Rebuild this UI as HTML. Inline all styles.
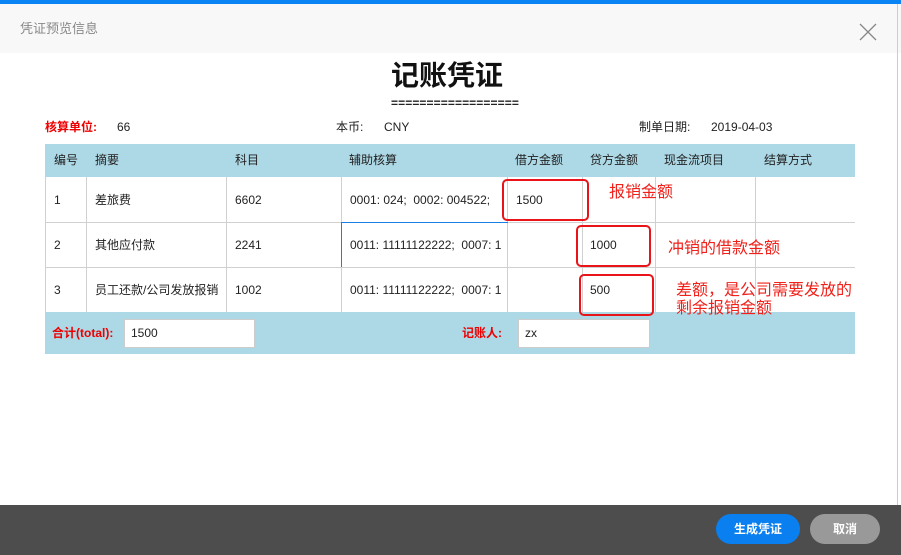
<!DOCTYPE html>
<html><head><meta charset="utf-8"><style>
*{margin:0;padding:0;box-sizing:border-box}
body{width:901px;height:555px;position:relative;background:#fff;font-family:"Liberation Sans","Noto Sans CJK SC",sans-serif;font-size:12px;color:#222;overflow:hidden}
.a{position:absolute;white-space:nowrap;line-height:14px}
.red{color:#e00}
.vl{position:absolute;width:1px;background:#d0d0d0}
.hl{position:absolute;height:1px;background:#d0d0d0}
.box{position:absolute;border:2px solid #e8141a;border-radius:5px}
.ann{position:absolute;color:#f0201a;font-size:16px;white-space:nowrap;line-height:18px}
.inp{position:absolute;background:#fff;border:1px solid #ccc;padding-left:6px;line-height:27px}
</style></head><body>
<div class="a" style="left:0;top:0;width:901px;height:4px;background:#0a84f5"></div>
<div class="a" style="left:0;top:4px;width:901px;height:49px;background:#f8f8f8"></div>
<div class="a" style="left:20px;top:22px;font-size:13px;color:#888">凭证预览信息</div>
<svg class="a" style="left:859px;top:23px" width="18" height="18"><path d="M1 1L17 17M17 1L1 17" stroke="#888" stroke-width="1.3"/></svg>
<div class="a" style="left:897px;top:4px;width:1px;height:501px;background:#ccc"></div>
<div class="a" style="left:391px;top:60px;font-size:28px;line-height:32px;font-weight:bold;color:#111">记账凭证</div>
<div class="a" style="left:391px;top:96px;font-size:12px;font-weight:bold;letter-spacing:0.1px">==================</div>
<div class="a red" style="left:45px;top:120px;font-weight:bold">核算单位:</div>
<div class="a" style="left:117px;top:120px">66</div>
<div class="a" style="left:336px;top:120px">本币:</div>
<div class="a" style="left:384px;top:120px">CNY</div>
<div class="a" style="left:639px;top:120px">制单日期:</div>
<div class="a" style="left:711px;top:120px">2019-04-03</div>
<div class="a" style="left:45px;top:144px;width:810px;height:33px;background:#add8e6"></div>
<div class="a" style="left:45px;top:312px;width:810px;height:42px;background:#add8e6"></div>
<div class="a" style="left:54px;top:153px">编号</div>
<div class="a" style="left:95px;top:153px">摘要</div>
<div class="a" style="left:235px;top:153px">科目</div>
<div class="a" style="left:349px;top:153px">辅助核算</div>
<div class="a" style="left:515px;top:153px">借方金额</div>
<div class="a" style="left:590px;top:153px">贷方金额</div>
<div class="a" style="left:664px;top:153px">现金流项目</div>
<div class="a" style="left:764px;top:153px">结算方式</div>
<div class="vl" style="left:45px;top:177px;height:135px"></div>
<div class="vl" style="left:86px;top:177px;height:135px"></div>
<div class="vl" style="left:226px;top:177px;height:135px"></div>
<div class="vl" style="left:341px;top:177px;height:135px"></div>
<div class="vl" style="left:507px;top:177px;height:135px"></div>
<div class="vl" style="left:582px;top:177px;height:135px"></div>
<div class="vl" style="left:655px;top:177px;height:135px"></div>
<div class="vl" style="left:755px;top:177px;height:135px"></div>
<div class="hl" style="left:45px;top:222px;width:810px"></div>
<div class="hl" style="left:45px;top:267px;width:810px"></div>
<div class="a" style="left:341px;top:222px;width:167px;height:1px;background:#1a7fe8"></div>
<div class="a" style="left:341px;top:222px;width:1px;height:45px;background:#1a7fe8"></div>
<div class="a" style="left:54px;top:193px">1</div><div class="a" style="left:95px;top:193px">差旅费</div><div class="a" style="left:235px;top:193px">6602</div><div class="a" style="left:350px;top:193px">0001: 024;&nbsp; 0002: 004522;</div><div class="a" style="left:516px;top:193px">1500</div>
<div class="a" style="left:54px;top:238px">2</div><div class="a" style="left:95px;top:238px">其他应付款</div><div class="a" style="left:235px;top:238px">2241</div><div class="a" style="left:350px;top:238px">0011: 11111122222;&nbsp; 0007: 1</div><div class="a" style="left:590px;top:238px">1000</div>
<div class="a" style="left:54px;top:283px">3</div><div class="a" style="left:95px;top:283px">员工还款/公司发放报销</div><div class="a" style="left:235px;top:283px">1002</div><div class="a" style="left:350px;top:283px">0011: 11111122222;&nbsp; 0007: 1</div><div class="a" style="left:590px;top:283px">500</div>
<div class="a red" style="left:52px;top:326px;font-weight:bold">合计(total):</div>
<div class="inp" style="left:124px;top:319px;width:131px;height:29px">1500</div>
<div class="a red" style="left:462px;top:326px;font-weight:bold">记账人:</div>
<div class="inp" style="left:518px;top:319px;width:132px;height:29px">zx</div>
<div class="box" style="left:502px;top:179px;width:87px;height:42px"></div>
<div class="box" style="left:576px;top:225px;width:75px;height:42px"></div>
<div class="box" style="left:579px;top:274px;width:75px;height:42px"></div>
<div class="ann" style="left:609px;top:184px">报销金额</div>
<div class="ann" style="left:668px;top:240px">冲销的借款金额</div>
<div class="ann" style="left:676px;top:282px">差额，是公司需要发放的</div>
<div class="ann" style="left:676px;top:300px">剩余报销金额</div>
<div class="a" style="left:0;top:505px;width:901px;height:50px;background:#4d4d4d"></div>
<div class="a" style="left:716px;top:514px;width:84px;height:30px;border-radius:15px;background:#0a7ff0;color:#fff;font-weight:bold;text-align:center;line-height:30px">生成凭证</div>
<div class="a" style="left:810px;top:514px;width:70px;height:30px;border-radius:15px;background:#999;color:#fff;font-weight:bold;text-align:center;line-height:30px">取消</div>
</body></html>
